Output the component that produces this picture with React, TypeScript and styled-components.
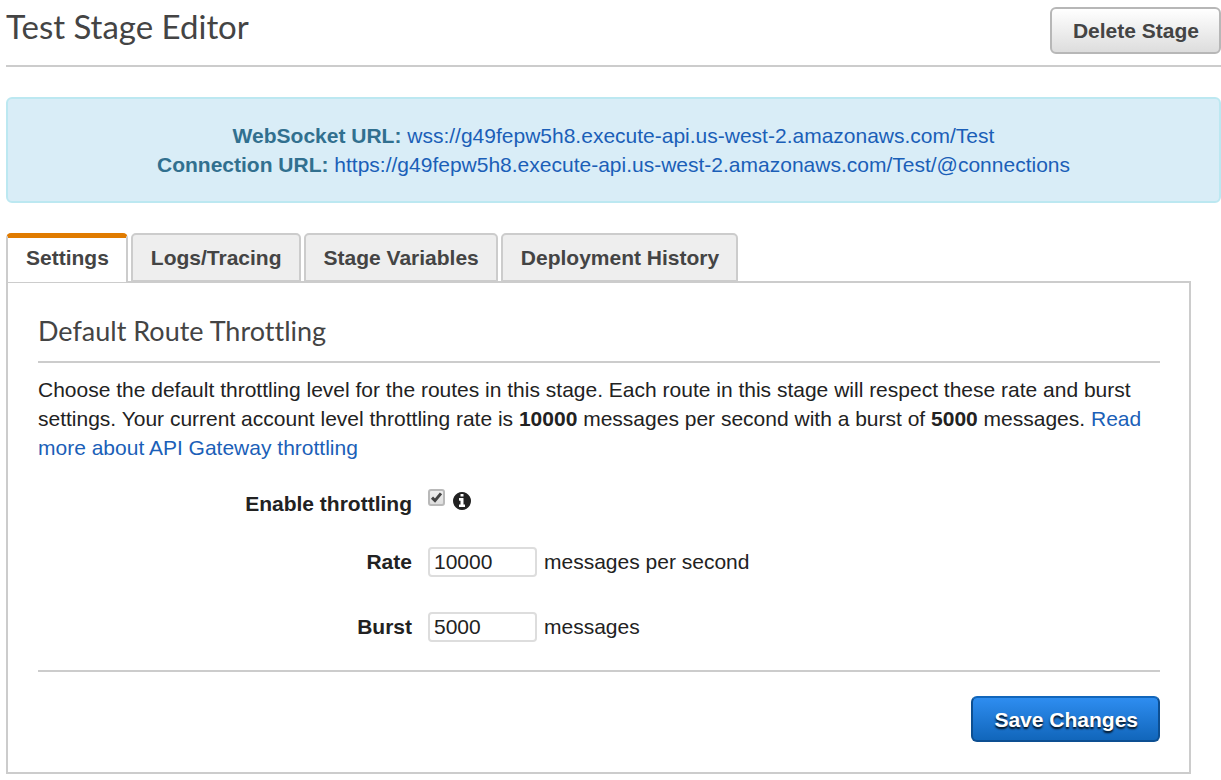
import React, { useState } from "react";
import styled, { createGlobalStyle, css } from "styled-components";

const GlobalStyle = createGlobalStyle`
  *, *::before, *::after { box-sizing: border-box; }
  body {
    margin: 0;
    background: #fff;
    color: #222;
    font-family: Arial, "Liberation Sans", sans-serif;
    font-size: 21px;
    line-height: 29px;
  }
`;

const Page = styled.main`
  padding: 7px 0 6px 6px;
`;

const Header = styled.header`
  display: flex;
  align-items: flex-start;
  justify-content: space-between;
  gap: 24px;
  padding-bottom: 11px;
  border-bottom: 2px solid #ccc;
`;

const Title = styled.h1`
  margin: 0;
  color: #444;
  font: 400 33px/38px Lato, sans-serif;
`;

const Button = styled.button<{ $primary?: boolean }>`
  height: 47px;
  padding: 0 20px 0 21px;
  border: 2px solid #b7b7b7;
  border-radius: 6px;
  background: linear-gradient(#fff, #ddd);
  color: #444;
  font: inherit;
  font-weight: 700;
  white-space: nowrap;
  cursor: pointer;
  ${(p) =>
    p.$primary &&
    css`
      height: 46px;
      border-color: #1166bb #0d4f92 #0d4f92;
      background: linear-gradient(#2e8df0, #1166bb) padding-box, #1166bb;
      color: #fff;
      text-shadow: 0 2px 2px rgba(0, 0, 0, 0.9);
    `}
`;

const Link = styled.a`
  color: #1b5fb8;
  text-decoration: none;
`;

const Notice = styled.section`
  margin: 30px 0;
  padding: 22px;
  border: 2px solid #bce8f1;
  border-radius: 6px;
  background: #d9edf7;
  color: #31708f;
  text-align: center;
`;

const TabList = styled.div`
  display: flex;
  gap: 3px;
`;

const Tab = styled.button<{ $active: boolean }>`
  height: 49px;
  padding: 0 17px 0 18px;
  border: 2px solid #ccc;
  border-radius: 5px 5px 0 0;
  background: #eee;
  color: #444;
  font: inherit;
  font-weight: 700;
  white-space: nowrap;
  cursor: pointer;
  ${(p) =>
    p.$active &&
    css`
      position: relative;
      border-top: 5px solid #e07b00;
      border-bottom: 0;
      padding-bottom: 5px;
      background: #fff;
    `}
`;

const Panel = styled.section`
  margin: -1px 30px 0 0;
  padding: 30px 29px 30px 30px;
  border: 2px solid #ccc;
`;

const PanelTitle = styled.h2`
  margin: 0 0 12px;
  padding-bottom: 12px;
  border-bottom: 2px solid #ccc;
  color: #444;
  font: 400 27px/36px Lato, sans-serif;
  font-variant-ligatures: none;
`;

const Description = styled.p`
  margin: 0 0 27px;
`;

const Fields = styled.div`
  padding-bottom: 28px;
`;

const Field = styled.div<{ $gap?: number }>`
  display: flex;
  gap: 16px;
  margin-top: ${(p) => p.$gap ?? 0}px;
`;

const FieldLabel = styled.label`
  flex: 0 0 33.333%;
  font-weight: 700;
  text-align: right;
`;

const FieldBody = styled.div`
  display: flex;
  align-items: flex-start;
  gap: 7px;
`;

const CheckRow = styled.div`
  display: flex;
  align-items: flex-start;
  gap: 8px;
`;

const CheckBox = styled.span`
  display: grid;
  width: 17px;
  height: 17px;

  > * {
    grid-area: 1 / 1;
  }

  svg {
    width: 17px;
    height: 17px;
    pointer-events: none;
    z-index: 1;
  }

  input:not(:checked) + svg {
    visibility: hidden;
  }
`;

const CheckInput = styled.input`
  appearance: none;
  width: 17px;
  height: 17px;
  margin: 0;
  border: 2px solid #b9b9b9;
  border-radius: 3px;
  background: linear-gradient(#eee, #dedede);
`;

const InfoButton = styled.button`
  display: flex;
  margin: 0;
  padding: 3px 0 0;
  border: 0;
  background: none;
  color: #222;
  cursor: pointer;
`;

const NumberBox = styled.input`
  width: 109px;
  height: 30px;
  padding: 0 4px;
  border: 2px solid #ddd;
  border-radius: 4px;
  background: #fff;
  color: #222;
  font: inherit;
`;

const Actions = styled.footer`
  display: flex;
  justify-content: flex-end;
  padding-top: 24px;
  border-top: 2px solid #ccc;
`;

const tabs = ["Settings", "Logs/Tracing", "Stage Variables", "Deployment History"];

function InfoIcon() {
  return (
    <svg width="18" height="18" viewBox="0 128 1536 1536" fill="currentColor" aria-hidden="true">
      <path d="M1024 1376v-160q0-14-9-23t-23-9h-96v-512q0-14-9-23t-23-9h-320q-14 0-23 9t-9 23v160q0 14 9 23t23 9h96v320h-96q-14 0-23 9t-9 23v160q0 14 9 23t23 9h448q14 0 23-9t9-23zm-128-896v-160q0-14-9-23t-23-9h-192q-14 0-23 9t-9 23v160q0 14 9 23t23 9h192q14 0 23-9t9-23zm640 416q0 209-103 385.5t-279.5 279.5-385.5 103-385.5-103-279.5-279.5-103-385.5 103-385.5 279.5-279.5 385.5-103 385.5 103 279.5 279.5 103 385.5z" />
    </svg>
  );
}

interface LimitFieldProps {
  id: string;
  label: string;
  unit: string;
  initial: string;
  gap: number;
}

function LimitField({ id, label, unit, initial, gap }: LimitFieldProps) {
  const [value, setValue] = useState(initial);
  return (
    <Field $gap={gap}>
      <FieldLabel htmlFor={id}>{label}</FieldLabel>
      <FieldBody>
        <NumberBox id={id} type="text" inputMode="numeric" value={value} onChange={(e) => setValue(e.target.value)} />
        <span>{unit}</span>
      </FieldBody>
    </Field>
  );
}

export default function App() {
  const [active, setActive] = useState(tabs[0]);
  return (
    <>
      <GlobalStyle />
      <Page>
        <Header>
          <Title>Test Stage Editor</Title>
          <Button type="button">Delete Stage</Button>
        </Header>

        <Notice>
          <div>
            <strong>WebSocket URL:</strong>{" "}
            <Link href="#websocket">wss://g49fepw5h8.execute-api.us-west-2.amazonaws.com/Test</Link>
          </div>
          <div>
            <strong>Connection URL:</strong>{" "}
            <Link href="#connections">https://g49fepw5h8.execute-api.us-west-2.amazonaws.com/Test/@connections</Link>
          </div>
        </Notice>

        <TabList role="tablist">
          {tabs.map((tab) => (
            <Tab
              key={tab}
              type="button"
              role="tab"
              aria-selected={tab === active}
              $active={tab === active}
              onClick={() => setActive(tab)}
            >
              {tab}
            </Tab>
          ))}
        </TabList>

        <Panel role="tabpanel">
          <PanelTitle>Default Route Throttling</PanelTitle>
          <Description>
            Choose the default throttling level for the routes in this stage. Each route in this stage will respect
            these rate and burst settings. Your current account level throttling rate is <strong>10000</strong> messages
            per second with a burst of <strong>5000</strong> messages.{" "}
            <Link href="#throttling">Read more about API Gateway throttling</Link>
          </Description>

          <Fields>
            <Field>
              <FieldLabel htmlFor="enable">Enable throttling</FieldLabel>
              <CheckRow>
                <CheckBox>
                  <CheckInput id="enable" type="checkbox" defaultChecked />
                  <svg viewBox="0 0 17 17" aria-hidden="true">
                    <path d="M4 8.6 7 11.6 13 4.4" fill="none" stroke="#444" strokeWidth="3" />
                  </svg>
                </CheckBox>
                <InfoButton type="button" aria-label="About throttling">
                  <InfoIcon />
                </InfoButton>
              </CheckRow>
            </Field>
            <LimitField id="rate" label="Rate" unit="messages per second" initial="10000" gap={29} />
            <LimitField id="burst" label="Burst" unit="messages" initial="5000" gap={35} />
          </Fields>

          <Actions>
            <Button type="button" $primary>
              Save Changes
            </Button>
          </Actions>
        </Panel>
      </Page>
    </>
  );
}
